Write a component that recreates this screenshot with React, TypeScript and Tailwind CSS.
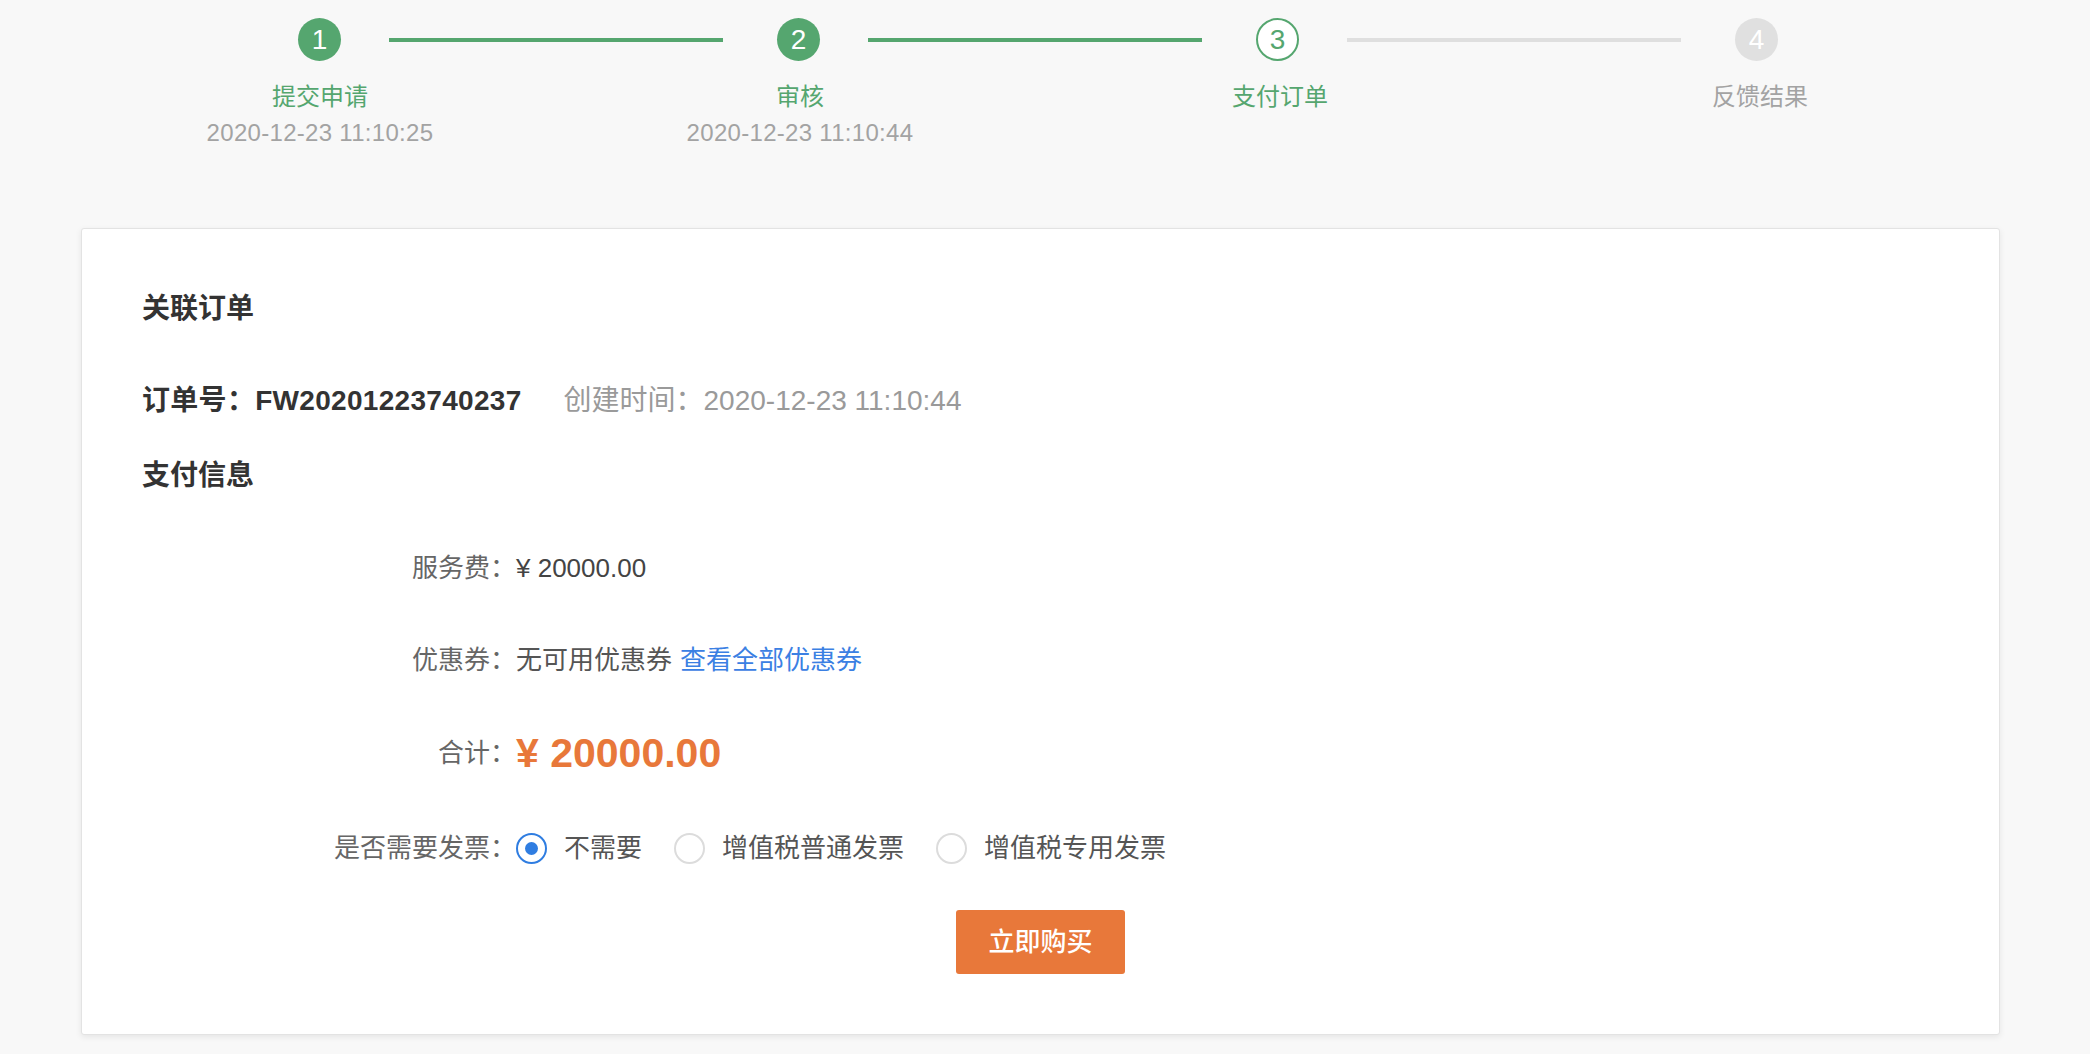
const steps = [
  { no: 1, title: "提交申请", time: "2020-12-23 11:10:25", state: "done" },
  { no: 2, title: "审核", time: "2020-12-23 11:10:44", state: "done" },
  { no: 3, title: "支付订单", time: "", state: "active" },
  { no: 4, title: "反馈结果", time: "", state: "todo" },
];

const Circle = ({ no, state }: { no: number; state: string }) => {
  if (state === "done")
    return (
      <div className="w-[43px] h-[43px] rounded-full bg-[#55a66f] text-white flex items-center justify-center text-[28px] font-light shrink-0">
        {no}
      </div>
    );
  if (state === "active")
    return (
      <div className="w-[43px] h-[43px] rounded-full bg-white border-2 border-[#55a66f] text-[#55a66f] flex items-center justify-center text-[28px] font-light shrink-0">
        {no}
      </div>
    );
  return (
    <div className="w-[43px] h-[43px] rounded-full bg-[#e0e0e0] text-white flex items-center justify-center text-[28px] font-light shrink-0">
      {no}
    </div>
  );
};

const Radio = ({ checked, label }: { checked?: boolean; label: string }) => (
  <label className="flex items-center">
    {checked ? (
      <span className="w-[31px] h-[31px] rounded-full border-2 border-[#2f7de1] flex items-center justify-center">
        <span className="w-[13px] h-[13px] rounded-full bg-[#2f7de1]" />
      </span>
    ) : (
      <span className="w-[31px] h-[31px] rounded-full border-2 border-[#dcdcdc]" />
    )}
    <span className="ml-[17px] text-[#555]">{label}</span>
  </label>
);

export default function App() {
  return (
    <div
      className="min-h-screen bg-[#f8f8f8] pt-[18px] pb-[20px]"
      style={{ fontFamily: '"Liberation Sans", "Noto Sans CJK SC", sans-serif' }}
    >
      {/* 步骤条 */}
      <div className="flex items-center pl-[298px]">
        {steps.map((s, i) => (
          <div key={s.no} className="flex items-center">
            <Circle no={s.no} state={s.state} />
            {i < steps.length - 1 && (
              <div
                className={
                  "ml-[48px] mr-[54px] w-[334px] h-[4px] " +
                  (i < 2 ? "bg-[#55a66f]" : "bg-[#dfdfdf]")
                }
              />
            )}
          </div>
        ))}
      </div>
      <div className="grid grid-cols-[480px_480px_480px_480px] pl-[80px] mt-[18px]">
        {steps.map((s) => (
          <div key={s.no} className="flex flex-col items-center text-[24px]">
            <div
              className={
                "leading-[36px] " +
                (s.state === "todo" ? "text-[#a3a3a3]" : "text-[#55a66f]")
              }
            >
              {s.title}
            </div>
            <div className="leading-[36px] text-[#a3a3a3] tracking-[0.3px]">{s.time}</div>
          </div>
        ))}
      </div>

      {/* 订单卡片 */}
      <div className="ml-[81px] mt-[77px] w-[1919px] bg-white border border-[#e3e3e3] rounded-[3px] shadow-[0_2px_6px_rgba(0,0,0,0.08)] pl-[60px] pt-[62px] pb-[60px]">
        <div className="text-[28px] leading-[36px] font-semibold text-[#333]">关联订单</div>
        <div className="mt-[56px] flex items-center text-[28px] leading-[36px]">
          <span className="font-semibold text-[#333] tracking-[0.3px]">订单号：FW20201223740237</span>
          <span className="ml-[42px] text-[#9a9a9a]">创建时间：2020-12-23 11:10:44</span>
        </div>
        <div className="mt-[39px] text-[28px] leading-[36px] font-semibold text-[#333]">支付信息</div>

        <div className="text-[26px] leading-[36px]">
          <div className="mt-[56px] flex items-center">
            <div className="w-[374px] text-right text-[#666]">服务费：</div>
            <div className="text-[#444]">¥ 20000.00</div>
          </div>
          <div className="mt-[56px] flex items-center">
            <div className="w-[374px] text-right text-[#666]">优惠券：</div>
            <div className="text-[#555]">无可用优惠券</div>
            <a className="ml-[8px] text-[#3b80e3] cursor-pointer">查看全部优惠券</a>
          </div>
          <div className="mt-[51px] h-[48px] flex items-center">
            <div className="w-[374px] text-right text-[#666]">合计：</div>
            <div className="text-[41px] font-bold text-[#e8783a]">¥ 20000.00</div>
          </div>
          <div className="mt-[53px] flex items-center">
            <div className="w-[374px] text-right text-[#666]">是否需要发票：</div>
            <div className="flex items-center gap-[32px]">
              <Radio checked label="不需要" />
              <Radio label="增值税普通发票" />
              <Radio label="增值税专用发票" />
            </div>
          </div>
        </div>

        <div className="mt-[44px] flex pl-[814px]">
          <button className="w-[169px] h-[64px] rounded-[3px] bg-[#e8783a] text-white text-[26px] font-medium">
            立即购买
          </button>
        </div>
      </div>
    </div>
  );
}
